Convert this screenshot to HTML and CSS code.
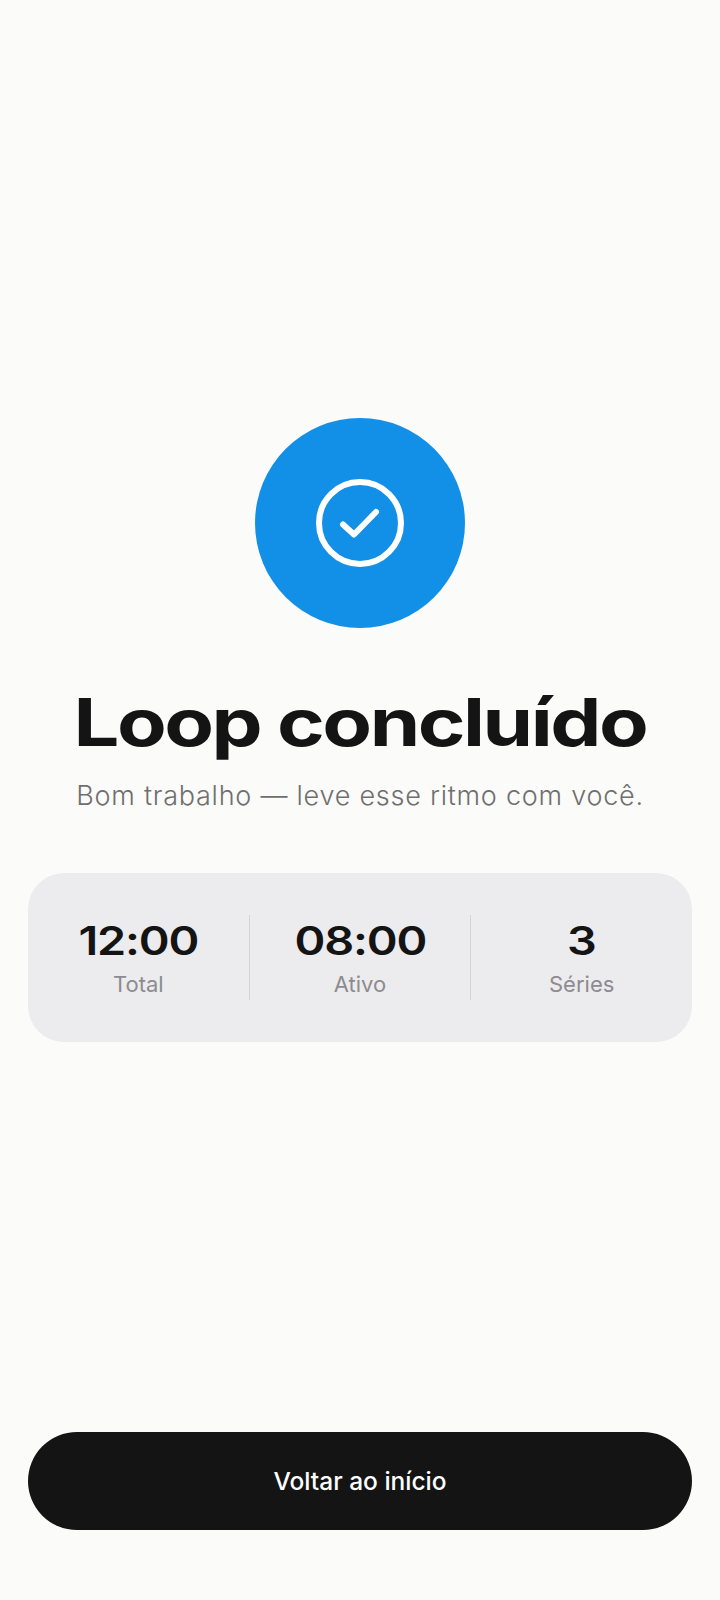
FILE: index.html
```html
<!DOCTYPE html>
<html lang="pt-BR">
  <head>
    <meta charset="UTF-8" />
    <meta name="viewport" content="width=device-width, initial-scale=1.0" />
    <title>Loop concluído</title>
    <link rel="stylesheet" href="styles.css">
  </head>
  <body>
    <div class="screen">
      <!-- Success badge -->
      <div class="badge">
        <svg class="badge-icon" viewBox="0 0 88 88">
          <circle class="ring" cx="44" cy="44" r="41" />
          <path class="tick" d="M27 45.5 L38 55.5 L60 33" />
        </svg>
      </div>
      <h1 class="title">Loop concluído</h1>
      <p class="subtitle">Bom trabalho — leve esse ritmo com você.</p>

      <!-- Stats -->
      <div class="stats">
        <div class="stat">
          <div class="stat-value">12:00</div>
          <div class="stat-label">Total</div>
        </div>
        <div class="stat">
          <div class="stat-value">08:00</div>
          <div class="stat-label">Ativo</div>
        </div>
        <div class="stat">
          <div class="stat-value">3</div>
          <div class="stat-label">Séries</div>
        </div>
      </div>

      <button class="home-btn">Voltar ao início</button>
    </div>
  </body>
</html>
```

FILE: styles.css
```css
/* Reset & Global Styles */
* {
  box-sizing: border-box;
  margin: 0;
  padding: 0;
}
body {
  background: #fbfbf9;
  font-family: Inter, sans-serif;
  color: #141414;
}

.screen {
  display: flex;
  flex-direction: column;
  align-items: center;
  height: 1600px;
  padding: 418px 28px 70px;
}

/* Success badge */
.badge {
  display: flex;
  justify-content: center;
  align-items: center;
  width: 210px;
  height: 210px;
  border-radius: 50%;
  background: #128fe6;
}
.badge-icon {
  width: 88px;
  height: 88px;
  fill: none;
  stroke: #ffffff;
  stroke-linecap: round;
  stroke-linejoin: round;
}
.ring {
  stroke-width: 6;
}
.tick {
  stroke-width: 6;
}

/* Heading */
.title {
  margin-top: 52px;
  font-size: 66px;
  line-height: 84px;
  font-weight: 700;
  letter-spacing: -2px;
  white-space: nowrap;
  transform: scaleX(1.23);
}
.subtitle {
  margin-top: 14px;
  font-size: 27px;
  line-height: 36px;
  font-weight: 300;
  letter-spacing: 0.75px;
  color: #6f6f6f;
}

/* Stats card */
.stats {
  display: flex;
  width: 100%;
  margin-top: 59px;
  padding: 42px 0;
  border-radius: 36px;
  background: #ecebed;
}
.stat {
  flex: 1;
  height: 85px;
  padding-top: 2px;
  text-align: center;
}
.stat + .stat {
  border-left: 1px solid #d4d3d5;
}
.stat-value {
  font-size: 40px;
  line-height: 48px;
  font-weight: 600;
  letter-spacing: -1px;
  transform: scaleX(1.17);
}
.stat-label {
  margin-top: 4px;
  font-size: 22px;
  line-height: 30px;
  font-weight: 400;
  color: #8c8c90;
}

/* Bottom button */
.home-btn {
  width: 100%;
  height: 98px;
  margin-top: auto;
  border: none;
  border-radius: 49px;
  background: #141414;
  color: #ffffff;
  font-family: Inter, sans-serif;
  font-size: 24.5px;
  font-weight: 500;
  cursor: pointer;
}
```
